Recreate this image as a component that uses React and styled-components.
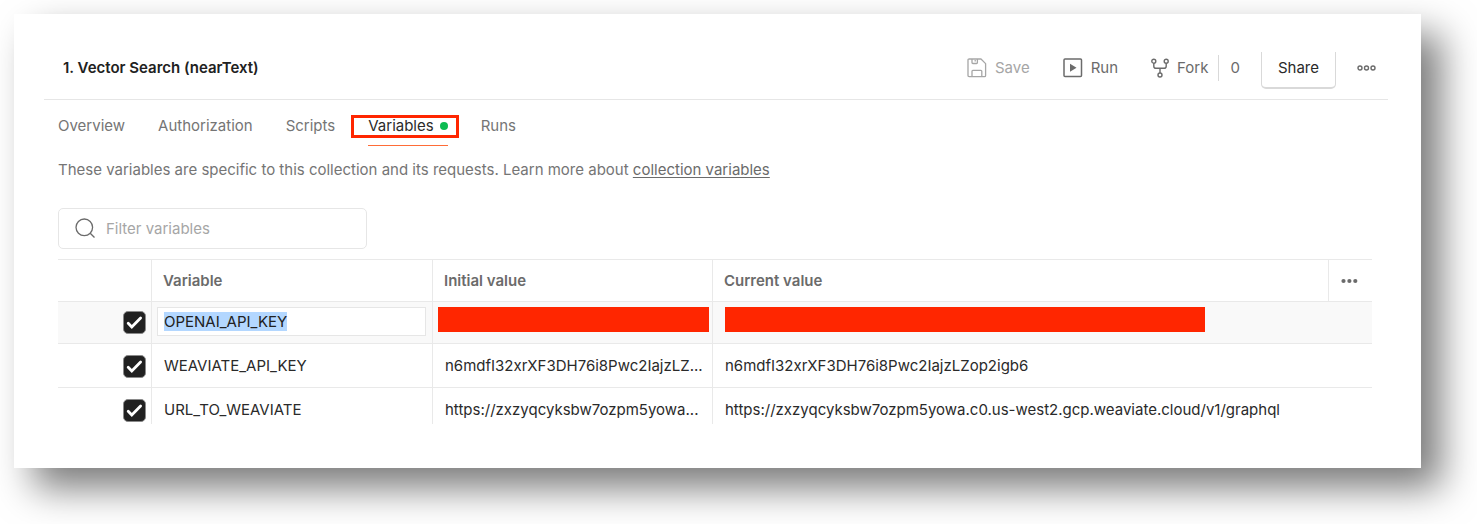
import React, { useEffect, useRef, useState } from "react";
import styled, { createGlobalStyle } from "styled-components";

const GlobalStyle = createGlobalStyle`
  *, *::before, *::after { box-sizing: border-box; }
  body {
    margin: 0;
    background: #fff;
    color: #2a2a2a;
    font-family: Inter, "Liberation Sans", sans-serif;
    font-size: 15px;
    font-optical-sizing: none;
    line-height: 20px;
  }
  button, input { font: inherit; font-optical-sizing: none; color: inherit; }
`;

const Page = styled.div`
  padding: 14px 56px 56px 14px;
  overflow: hidden;
`;

const Card = styled.main`
  padding: 38px 33px 44px 30px;
  background: #fff;
  box-shadow: 20px 20px 36px rgba(0, 0, 0, 0.52);
`;

const Header = styled.header`
  display: flex;
  align-items: flex-start;
  justify-content: space-between;
  padding: 0 12px 10px 19px;
  border-bottom: 1px solid #e6e6e6;
`;

const Title = styled.h1`
  margin: 0;
  color: #212121;
  font-size: 15px;
  font-weight: 600;
  line-height: 32px;
`;

const Actions = styled.div`
  display: flex;
  align-items: flex-start;
`;

const Action = styled.button`
  display: flex;
  align-items: center;
  gap: 8px;
  height: 32px;
  margin-right: ${(p) => p.$after ?? 0}px;
  padding: 0;
  border: 0;
  background: none;
  color: #6b6b6b;

  &:disabled { color: #a6a6a6; }
`;

const ForkCount = styled.span`
  height: 26px;
  margin: 3px 21px 0 0;
  padding-left: 11px;
  border-left: 1px solid #d9d9d9;
  color: #6b6b6b;
  line-height: 26px;
`;

const ShareButton = styled.button`
  height: 37px;
  margin-right: 21px;
  padding: 0 16px 4px;
  border: solid #d9d9d9;
  border-width: 0 1px 2px;
  border-radius: 0 0 5px 5px;
  background: #fff;
`;

const Content = styled.div`
  padding: 0 16px 0 14px;
`;

const Tabs = styled.nav`
  display: flex;
  gap: 33px;
  padding-top: 14px;
`;

const Tab = styled.a`
  position: relative;
  display: flex;
  align-items: center;
  gap: 6px;
  padding: 2px 0 10px;
  color: ${(p) => (p.$active ? "#2a2a2a" : "#757575")};
  text-decoration: none;

  &::after {
    content: "";
    position: absolute;
    inset: auto 0 0;
    height: 1px;
    background: ${(p) => (p.$active ? "#ff6c37" : "transparent")};
  }
`;

const ChangedDot = styled.span`
  width: 8px;
  height: 8px;
  border-radius: 50%;
  background: #0cbb52;
`;

const Highlight = styled.span`
  position: absolute;
  inset: 1px -11px 8px -17px;
  border: 3px solid #ff2600;
`;

const Description = styled.p`
  margin: 14px 0 28px;
  color: #757575;

  a { color: #6b6b6b; text-underline-offset: 2px; }
`;

const Filter = styled.label`
  display: flex;
  align-items: center;
  gap: 10px;
  width: 309px;
  height: 41px;
  padding: 0 16px;
  border: 1px solid #e6e6e6;
  border-radius: 5px;
  color: #6b6b6b;
`;

const FilterInput = styled.input`
  flex: 1;
  min-width: 0;
  padding: 0;
  border: 0;
  outline: 0;
  background: none;

  &::placeholder { color: #a6a6a6; opacity: 1; }
`;

const Table = styled.table`
  width: 100%;
  margin-top: 10px;
  border-spacing: 0;
  table-layout: fixed;
`;

const Col = styled.col`
  width: ${(p) => p.$width};
`;

const HeadCell = styled.th`
  height: 43px;
  padding: 0 11px;
  border: solid #e9e9e9;
  border-width: 1px 0 1px ${(p) => (p.$first ? 0 : "1px")};
  color: #6b6b6b;
  font-size: 15px;
  font-weight: 600;
  text-align: left;
`;

const MoreButton = styled.button`
  display: grid;
  place-items: center;
  padding: 0;
  border: 0;
  background: none;
  color: #6b6b6b;
`;

const Row = styled.tr`
  background: ${(p) => (p.$active ? "#f9f9f9" : "none")};

  &:last-child td { height: 36px; padding-bottom: 0; border-bottom: 0; }
`;

const Cell = styled.td`
  height: ${(p) => (p.$active ? 42 : 44)}px;
  padding: ${(p) => (p.$tight ? "5px 3px 5px 5px" : "12px 4px 11px 12px")};
  border-bottom: 1px solid #e9e9e9;
  border-left: ${(p) => (p.$plain ? "0" : "1px solid #e9e9e9")};
  white-space: nowrap;
  vertical-align: top;
`;

const CheckCell = styled(Cell)`
  padding: ${(p) => (p.$active ? 9 : 11)}px 5px 0 0;
`;

const NameCell = styled(Cell)`
  padding-right: 6px;
`;

const TickLabel = styled.label`
  display: grid;
  justify-content: end;

  > * { grid-area: 1 / 1; }
`;

const TickInput = styled.input`
  appearance: none;
  width: 23px;
  height: 23px;
  margin: 0;
  border: 1px solid #8a8a8a;
  border-radius: 5px;
  background: #fff;

  &:checked { background: #212121; }
  &:not(:checked) + svg { visibility: hidden; }
`;

const NameInput = styled.input`
  display: block;
  width: 100%;
  height: 29px;
  padding: 0 6px;
  border: 1px solid #e6e6e6;
  outline: 0;
  background: #fff;

  &::selection { background: #b3d7ff; color: #212121; }
`;

const Redaction = styled.div`
  width: ${(p) => p.$width};
  max-width: 100%;
  height: 25px;
  margin-left: ${(p) => p.$inset ?? 0}px;
  background: #ff2600;
`;

const SaveIcon = () => (
  <svg width="20" height="20" viewBox="0 0 20 20" fill="none" stroke="currentColor" strokeWidth="1.3" strokeLinejoin="round" aria-hidden="true">
    <path d="M1 2.2Q1 1 2.2 1H14l4.6 4.6v11.8q0 1.2-1.2 1.2H2.2Q1 18.6 1 17.4Z" />
    <path d="M5 1v3.6q0 .9.9.9h3.6q.9 0 .9-.9V1M8.2 2v1.5M5 18.5v-5.3q0-.9.9-.9h8q.9 0 .9.9v5.3" />
  </svg>
);

const RunIcon = () => (
  <svg width="20" height="20" viewBox="0 0 20 20" fill="none" stroke="currentColor" strokeWidth="1.5" aria-hidden="true">
    <rect x="1" y="1" width="17.5" height="17.5" rx="1" />
    <path d="M7 5.8v8l6.5-4z" fill="currentColor" stroke="none" />
  </svg>
);

const ForkIcon = () => (
  <svg width="18" height="20" viewBox="0 0 18 20" fill="none" stroke="currentColor" strokeWidth="1.4" aria-hidden="true">
    <circle cx="2.8" cy="3.2" r="2" />
    <circle cx="15.2" cy="3.2" r="2" />
    <circle cx="9" cy="17" r="2" />
    <path d="M2.8 5.2v3q0 2.1 2.1 2.1h8.2q2.1 0 2.1-2.1v-3M9 10.3V15" />
  </svg>
);

const MoreIcon = () => (
  <svg width="19" height="8" viewBox="0 0 19 8" fill="none" stroke="currentColor" strokeWidth="1.4" aria-hidden="true">
    <circle cx="3" cy="4" r="2" />
    <circle cx="9.5" cy="4" r="2" />
    <circle cx="16" cy="4" r="2" />
  </svg>
);

const ColumnsIcon = () => (
  <svg width="18" height="6" viewBox="0 0 18 6" fill="currentColor" aria-hidden="true">
    <circle cx="3.5" cy="3" r="2.1" />
    <circle cx="9.4" cy="3" r="2.1" />
    <circle cx="15.3" cy="3" r="2.1" />
  </svg>
);

const SearchIcon = () => (
  <svg width="21" height="21" viewBox="0 0 21 21" fill="none" stroke="currentColor" strokeWidth="1.3" aria-hidden="true">
    <circle cx="9.3" cy="9.3" r="8.3" />
    <path d="m15.2 15.2 4.3 4.3" />
  </svg>
);

const TickIcon = () => (
  <svg width="23" height="23" viewBox="0 0 23 23" fill="none" stroke="#fff" strokeWidth="2.8" strokeLinecap="round" aria-hidden="true">
    <path d="m5.2 12.2 3.6 3.8 8.8-9" />
  </svg>
);

const TABS = ["Overview", "Authorization", "Scripts", "Variables", "Runs"];

const VARIABLES = [
  { name: "OPENAI_API_KEY", editing: true },
  {
    name: "WEAVIATE_API_KEY",
    initial: "n6mdfI32xrXF3DH76i8Pwc2IajzLZ...",
    current: "n6mdfI32xrXF3DH76i8Pwc2IajzLZop2igb6",
  },
  {
    name: "URL_TO_WEAVIATE",
    initial: "https://zxzyqcyksbw7ozpm5yowa...",
    current: "https://zxzyqcyksbw7ozpm5yowa.c0.us-west2.gcp.weaviate.cloud/v1/graphql",
  },
];

function EditableName({ initialName }) {
  const [name, setName] = useState(initialName);
  const ref = useRef(null);

  useEffect(() => {
    ref.current.focus();
    ref.current.select();
  }, []);

  return (
    <NameInput
      ref={ref}
      aria-label="Variable name"
      value={name}
      spellCheck={false}
      onChange={(e) => setName(e.target.value)}
    />
  );
}

function VariableRow({ name, initial, current, editing }) {
  return (
    <Row $active={editing}>
      <CheckCell $plain $active={editing}>
        <TickLabel>
          <TickInput type="checkbox" defaultChecked aria-label={name} />
          <TickIcon />
        </TickLabel>
      </CheckCell>
      <NameCell $tight={editing} $active={editing}>
        {editing ? <EditableName initialName={name} /> : name}
      </NameCell>
      <Cell $tight={editing} $active={editing}>
        {editing ? <Redaction $width="100%" /> : initial}
      </Cell>
      <Cell $tight={editing} $active={editing}>
        {editing ? <Redaction $width="480px" $inset={7} /> : current}
      </Cell>
      <Cell $plain $active={editing} />
    </Row>
  );
}

export default function App() {
  return (
    <Page>
      <GlobalStyle />
      <Card>
        <Header>
          <Title>1. Vector Search (nearText)</Title>
          <Actions>
            <Action disabled $after={33}><SaveIcon />Save</Action>
            <Action $after={33}><RunIcon />Run</Action>
            <Action $after={10}><ForkIcon />Fork</Action>
            <ForkCount>0</ForkCount>
            <ShareButton>Share</ShareButton>
            <Action aria-label="More actions"><MoreIcon /></Action>
          </Actions>
        </Header>
        <Content>
          <Tabs>
            {TABS.map((tab) => (
              <Tab key={tab} href="#" $active={tab === "Variables"}>
                {tab}
                {tab === "Variables" && (
                  <>
                    <ChangedDot />
                    <Highlight />
                  </>
                )}
              </Tab>
            ))}
          </Tabs>
          <Description>
            These variables are specific to this collection and its requests. Learn more about{" "}
            <a href="#">collection variables</a>
          </Description>
          <Filter>
            <SearchIcon />
            <FilterInput type="text" placeholder="Filter variables" aria-label="Filter variables" />
          </Filter>
          <Table>
            <colgroup>
              <Col $width="93px" />
              <Col $width="281px" />
              <Col $width="280px" />
              <Col />
              <Col $width="44px" />
            </colgroup>
            <thead>
              <tr>
                <HeadCell $first />
                <HeadCell>Variable</HeadCell>
                <HeadCell>Initial value</HeadCell>
                <HeadCell>Current value</HeadCell>
                <HeadCell>
                  <MoreButton aria-label="Column options"><ColumnsIcon /></MoreButton>
                </HeadCell>
              </tr>
            </thead>
            <tbody>
              {VARIABLES.map((variable) => (
                <VariableRow key={variable.name} {...variable} />
              ))}
            </tbody>
          </Table>
        </Content>
      </Card>
    </Page>
  );
}
